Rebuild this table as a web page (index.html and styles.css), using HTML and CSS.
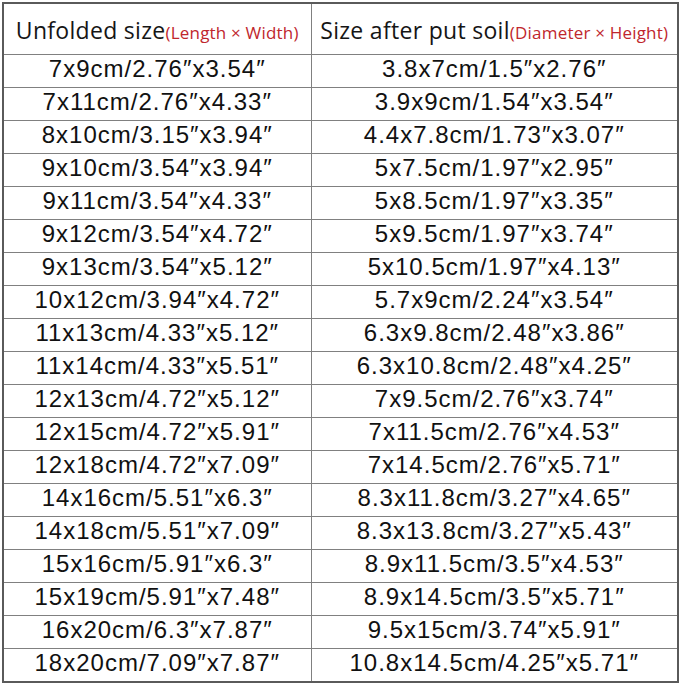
FILE: index.html
```html
<!DOCTYPE html>
<html>
<head>
<meta charset="utf-8">
<link rel="stylesheet" href="styles.css">
</head>
<body>
<table class="sizes">
  <colgroup><col class="c1"><col class="c2"></colgroup>
  <thead>
    <tr class="head">
      <th><span class="main">Unfolded size</span><span class="sub">(Length × Width)</span></th>
      <th><span class="main">Size after put soil</span><span class="sub">(Diameter × Height)</span></th>
    </tr>
  </thead>
  <tbody>
    <tr><td>7x9cm/2.76″x3.54″</td><td>3.8x7cm/1.5″x2.76″</td></tr>
    <tr><td>7x11cm/2.76″x4.33″</td><td>3.9x9cm/1.54″x3.54″</td></tr>
    <tr><td>8x10cm/3.15″x3.94″</td><td>4.4x7.8cm/1.73″x3.07″</td></tr>
    <tr><td>9x10cm/3.54″x3.94″</td><td>5x7.5cm/1.97″x2.95″</td></tr>
    <tr><td>9x11cm/3.54″x4.33″</td><td>5x8.5cm/1.97″x3.35″</td></tr>
    <tr><td>9x12cm/3.54″x4.72″</td><td>5x9.5cm/1.97″x3.74″</td></tr>
    <tr><td>9x13cm/3.54″x5.12″</td><td>5x10.5cm/1.97″x4.13″</td></tr>
    <tr><td>10x12cm/3.94″x4.72″</td><td>5.7x9cm/2.24″x3.54″</td></tr>
    <tr><td>11x13cm/4.33″x5.12″</td><td>6.3x9.8cm/2.48″x3.86″</td></tr>
    <tr><td>11x14cm/4.33″x5.51″</td><td>6.3x10.8cm/2.48″x4.25″</td></tr>
    <tr><td>12x13cm/4.72″x5.12″</td><td>7x9.5cm/2.76″x3.74″</td></tr>
    <tr><td>12x15cm/4.72″x5.91″</td><td>7x11.5cm/2.76″x4.53″</td></tr>
    <tr><td>12x18cm/4.72″x7.09″</td><td>7x14.5cm/2.76″x5.71″</td></tr>
    <tr><td>14x16cm/5.51″x6.3″</td><td>8.3x11.8cm/3.27″x4.65″</td></tr>
    <tr><td>14x18cm/5.51″x7.09″</td><td>8.3x13.8cm/3.27″x5.43″</td></tr>
    <tr><td>15x16cm/5.91″x6.3″</td><td>8.9x11.5cm/3.5″x4.53″</td></tr>
    <tr><td>15x19cm/5.91″x7.48″</td><td>8.9x14.5cm/3.5″x5.71″</td></tr>
    <tr><td>16x20cm/6.3″x7.87″</td><td>9.5x15cm/3.74″x5.91″</td></tr>
    <tr><td>18x20cm/7.09″x7.87″</td><td>10.8x14.5cm/4.25″x5.71″</td></tr>
  </tbody>
</table>
</body>
</html>
```
FILE: styles.css
```css
html, body {
  margin: 0;
  padding: 0;
  background: #ffffff;
}
body {
  padding: 2px 0 0 2px;
}
.sizes {
  border-collapse: collapse;
  table-layout: fixed;
  width: 675px;
  border: 2px solid #5a5a5a;
  color: #111;
}
.c1 { width: 308px; }
.c2 { width: 367px; }
.sizes th,
.sizes td {
  border: 1px solid #808080;
  padding: 0;
  text-align: center;
  white-space: nowrap;
  overflow: hidden;
}
.head th {
  height: 49px;
  padding-top: 1px;
  font-weight: normal;
  font-family: "Open Sans", "Noto Sans", sans-serif;
  color: #151515;
}
.main {
  font-size: 23px;
  letter-spacing: 0.3px;
}
.sub {
  font-size: 17px;
  letter-spacing: 0.2px;
  color: #c0262d;
}
.sizes td {
  height: 28px;
  padding-bottom: 4px;
  font-family: "Liberation Sans", Arial, sans-serif;
  font-size: 24px;
  letter-spacing: 1px;
  line-height: 28px;
}
```
